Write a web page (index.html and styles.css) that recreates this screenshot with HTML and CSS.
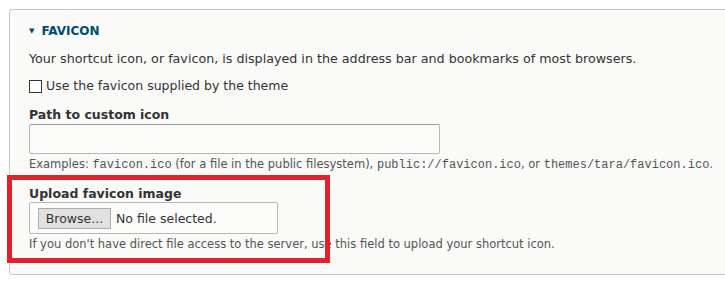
FILE: index.html
```html
<!DOCTYPE html>
<html lang="en">
<head>
    <meta charset="UTF-8">
    <title>Favicon settings</title>
    <link rel="stylesheet" href="styles.css">
</head>
<body>
    <div class="details">
        <div class="summary"><span class="arrow">&#9660;</span>FAVICON</div>

        <div class="wrapper">
            <p class="intro">Your shortcut icon, or favicon, is displayed in the address bar and bookmarks of most browsers.</p>

            <label class="check">
                <span class="box"></span>
                Use the favicon supplied by the theme
            </label>

            <div class="item">
                <div class="label">Path to custom icon</div>
                <div class="text-input"></div>
                <div class="help">Examples: <code>favicon.ico</code> (for a file in the public filesystem), <code>public://favicon.ico</code>, or <code>themes/tara/favicon.ico</code>.</div>
            </div>

            <div class="item upload">
                <div class="label">Upload favicon image</div>
                <div class="file-input">
                    <span class="browse">Browse...</span>
                    <span class="no-file">No file selected.</span>
                </div>
                <div class="help">If you don't have direct file access to the server, use this field to upload your shortcut icon.</div>
            </div>
        </div>

        <!-- annotation box -->
        <div class="highlight"></div>
    </div>
</body>
</html>
```

FILE: styles.css
```css
body {
    margin: 0;
    background: #fff;
    font-family: 'DejaVu Sans', Verdana, sans-serif;
    color: #333;
    overflow: hidden;
}

/* Fieldset */
.details {
    position: relative;
    margin: 9px 0 0 9px;
    width: 760px;
    height: 266px;
    box-sizing: border-box;
    border: 1px solid #c8c8c8;
    border-radius: 3px;
    background: #fafaf8;
}

.summary {
    margin: 15px 0 0 19px;
    height: 12px;
    line-height: 12px;
    font-size: 12px;
    font-weight: bold;
    color: #004a73;
    display: flex;
    align-items: center;
}

.arrow {
    font-size: 7px;
    margin-right: 7px;
}

.wrapper {
    padding: 0 0 0 19px;
}

.intro {
    margin: 14px 0 0;
    font-size: 12.7px;
    line-height: 16px;
}

.check {
    display: flex;
    align-items: center;
    margin-top: 11px;
    font-size: 12.5px;
    line-height: 16px;
}

.box {
    width: 11px;
    height: 11px;
    border: 1px solid #333;
    background: #fff;
    margin-right: 4px;
}

.item {
    margin-top: 13px;
}

.label {
    font-size: 12.5px;
    font-weight: bold;
    line-height: 16px;
}

.text-input {
    margin-top: 1px;
    width: 411px;
    height: 30px;
    box-sizing: border-box;
    border: 1px solid #b8b8b8;
    border-top-color: #999;
    border-radius: 2px;
    background: #fcfcfa;
}

.help {
    margin-top: 3px;
    font-size: 11.5px;
    line-height: 15px;
    color: #555;
}

.help code {
    font-family: 'Liberation Mono', 'Courier New', monospace;
    font-size: 12px;
}

.upload {
    margin-top: 13px;
}

.file-input {
    width: 249px;
    height: 32px;
    box-sizing: border-box;
    border: 1px solid #b8b8b8;
    border-radius: 2px;
    background: #fcfcfa;
    display: flex;
    align-items: center;
    padding-left: 8px;
    font-size: 12.5px;
}

.browse {
    display: inline-block;
    width: 73px;
    height: 21px;
    line-height: 19px;
    box-sizing: border-box;
    border: 1px solid #adadad;
    background: #e1e1e1;
    text-align: center;
    margin-right: 5px;
}

/* Red annotation rectangle */
.highlight {
    position: absolute;
    left: -3px;
    top: 165px;
    width: 323px;
    height: 88px;
    box-sizing: border-box;
    border: 5px solid #e3202b;
}
```
